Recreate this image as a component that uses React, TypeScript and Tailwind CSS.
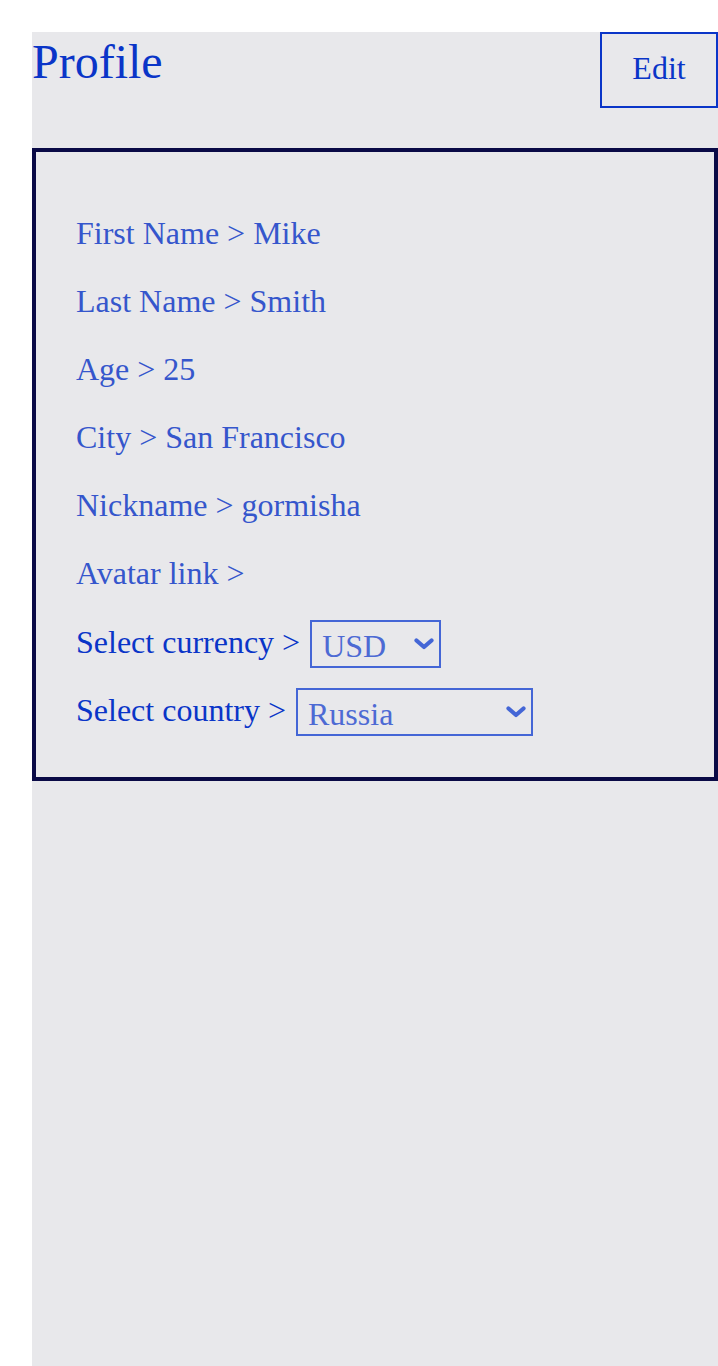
import React, { useState } from 'react';

const rows = [
  { label: 'First Name', value: 'Mike' },
  { label: 'Last Name', value: 'Smith' },
  { label: 'Age', value: '25' },
  { label: 'City', value: 'San Francisco' },
  { label: 'Nickname', value: 'gormisha' },
  { label: 'Avatar link', value: '' },
];

const Chevron = () => (
  <svg
    width="20"
    height="12"
    viewBox="0 0 20 12"
    className="pointer-events-none absolute right-[7px] top-1/2 -translate-y-1/2"
  >
    <path d="M2.5 2.5 L10 9 L17.5 2.5" fill="none" stroke="#4466d6" strokeWidth="4.2" strokeLinecap="round" strokeLinejoin="round" />
  </svg>
);

interface SelectRowProps {
  label: string;
  value: string;
  options: string[];
  widthClass: string;
  onChange: (v: string) => void;
}

const SelectRow = ({ label, value, options, widthClass, onChange }: SelectRowProps) => (
  <div className="flex h-12 items-center gap-[10px]">
    <span className="text-[#0a35c8] -mt-[4px]">{label} &gt;</span>
    <div className={`relative h-12 ${widthClass}`}>
      <select
        value={value}
        onChange={(e) => onChange(e.target.value)}
        className="h-full w-full appearance-none border-2 border-[#4466d6] bg-transparent pl-[10px] pb-[7px] text-[32px] text-[#4d6ad4] outline-none"
        style={{ fontFamily: '"Liberation Serif", serif' }}
      >
        {options.map((o) => (
          <option key={o} value={o}>
            {o}
          </option>
        ))}
      </select>
      <Chevron />
    </div>
  </div>
);

export default function App() {
  const [currency, setCurrency] = useState('USD');
  const [country, setCountry] = useState('Russia');

  return (
    <div className="min-h-[1366px] bg-white pl-8 pt-8 font-['Liberation_Serif',serif]">
      <div className="min-h-[1334px] bg-[#e8e8eb]">
        <div className="flex items-start justify-between">
          <h1 className="-mt-[6px] text-[48px] leading-normal text-[#0a35c8]">Profile</h1>
          <button
            type="button"
            className="flex h-[76px] w-[118px] items-center justify-center border-2 border-[#0a35c8] pb-[4px] text-[32px] text-[#0a35c8]"
          >
            Edit
          </button>
        </div>

        <div className="mt-[40px] flex flex-col gap-5 border-4 border-[#0a0a46] px-10 pt-[57px] pb-[41px] text-[32px]">
          {rows.map((r) => (
            <div key={r.label} className="flex h-12 items-center text-[#3556cc]">
              {r.label} &gt; {r.value}
            </div>
          ))}
          <div className="mt-[3px]">
            <SelectRow
              label="Select currency"
              value={currency}
              options={['USD', 'EUR', 'RUB']}
              widthClass="w-[131px]"
              onChange={setCurrency}
            />
          </div>
          <SelectRow
            label="Select country"
            value={country}
            options={['Russia', 'USA', 'Germany']}
            widthClass="w-[237px]"
            onChange={setCountry}
          />
        </div>
      </div>
    </div>
  );
}
